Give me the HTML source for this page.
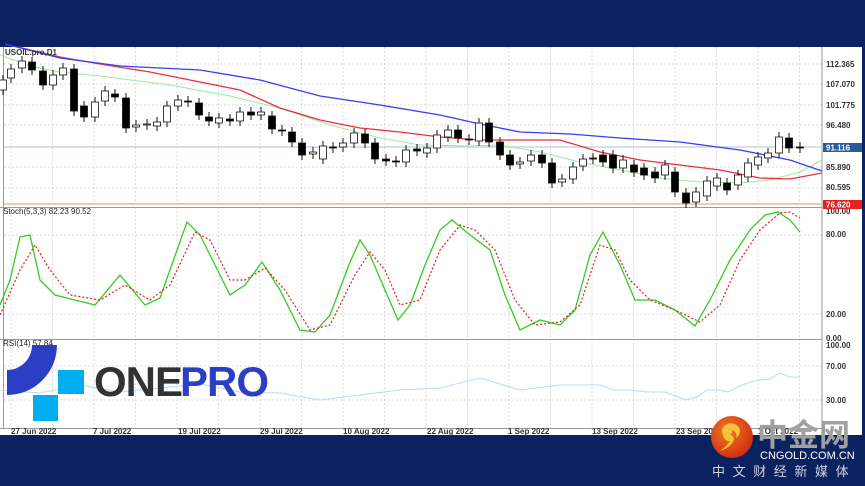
<!DOCTYPE html><html><head><meta charset="utf-8"><style>
body{margin:0;width:865px;height:486px;background:#0b2260;overflow:hidden;font-family:"Liberation Sans",sans-serif}
svg{position:absolute;left:0;top:0}
</style></head><body>
<svg width="865" height="486" viewBox="0 0 865 486" xmlns="http://www.w3.org/2000/svg" font-family="Liberation Sans, sans-serif">
<rect x="0" y="47" width="862" height="388" fill="#fff"/>
<g id="grid" stroke="#ccc" stroke-dasharray="2,2" stroke-width="0.7"></g>
<g stroke="#999" stroke-width="1" fill="none">
<line x1="822" y1="47" x2="822" y2="429"/>
<line x1="0" y1="207.5" x2="822" y2="207.5"/>
<line x1="0" y1="339.5" x2="822" y2="339.5"/>
<line x1="0" y1="428.5" x2="822" y2="428.5"/>
<line x1="3.5" y1="47" x2="3.5" y2="428"/>
</g>
<line x1="4" y1="147" x2="822" y2="147" stroke="#c8d6e4" stroke-width="1.5"/>
<line x1="4" y1="204" x2="822" y2="204" stroke="#f7c4c4" stroke-width="2"/>
<polyline fill="none" stroke="#9ee89e" stroke-width="1" points="0,55 30,66 60,72 100,76 170,85 230,96 280,108 330,125 380,138 420,145 470,146 500,145 540,152 580,162 620,170 660,178 700,182 740,183 770,180 800,172 822,160"/>
<polyline fill="none" stroke="#e8323a" stroke-width="1.3" points="18,47 60,57 100,64 150,72 200,82 240,90 280,108 320,120 360,128 400,132 440,137 480,140 520,140 560,140 600,152 640,160 680,165 720,170 760,178 790,179 822,173"/>
<polyline fill="none" stroke="#3a3ef0" stroke-width="1.3" points="5,44 60,58 120,66 200,70 260,80 320,96 380,105 440,115 480,124 520,132 570,134 620,138 680,142 740,150 790,160 822,171"/>
<g id="candles"></g>
<polyline fill="none" stroke="#33cc22" stroke-width="1.3" points="0,305 10,280 20,237 30,235 40,280 55,295 75,300 95,305 120,275 145,305 160,298 187,222 200,235 215,265 230,295 245,285 262,262 280,290 300,330 315,332 330,315 350,262 360,240 370,255 385,290 398,320 410,305 425,265 440,230 452,220 470,235 490,250 505,295 520,330 540,320 560,325 575,310 590,255 603,232 620,265 635,300 655,300 675,310 695,326 710,300 730,260 750,230 765,215 778,212 790,220 800,232"/>
<polyline fill="none" stroke="#e02020" stroke-width="1.2" stroke-dasharray="2,2" points="0,315 20,270 35,245 50,270 70,295 100,300 125,285 150,300 170,285 195,232 210,240 230,280 245,280 265,268 285,290 310,330 330,325 355,275 370,252 385,270 400,305 420,300 440,250 460,225 475,230 495,250 515,300 535,325 560,322 580,305 600,245 615,250 630,280 650,300 675,310 700,322 720,305 740,260 760,230 780,213 790,212 800,218"/>
<polyline fill="none" stroke="#b8d8f4" stroke-width="1" points="0,390 40,393 80,385 120,392 160,388 200,384 240,392 280,393 320,400 360,395 400,390 440,388 480,378 520,390 560,385 600,385 614,390 630,390 647,392 665,392 678,397 686,400 697,397 707,390 718,390 728,392 740,386 750,382 760,380 770,379 780,373 790,377 800,377"/>
<g font-size="8" fill="#333" font-weight="bold">
<text x="5" y="55">USOIL.pro,D1</text>
<text x="3" y="214" font-weight="normal" fill="#222">Stoch(5,3,3) 82.23 90.52</text>
<text x="3" y="346" font-weight="normal" fill="#222">RSI(14) 57.84</text>
<text x="826" y="67">112.365</text><text x="826" y="87">107.070</text><text x="826" y="108">101.775</text><text x="826" y="128">96.480</text>
<text x="826" y="170">85.890</text><text x="826" y="190">80.595</text>
<text x="826" y="214">100.00</text><text x="826" y="237">80.00</text><text x="826" y="317">20.00</text><text x="826" y="341">0.00</text>
<text x="826" y="348">100.00</text><text x="826" y="369">70.00</text><text x="826" y="403">30.00</text>
<text x="11" y="434">27 Jun 2022</text><text x="93" y="434">7 Jul 2022</text><text x="178" y="434">19 Jul 2022</text><text x="260" y="434">29 Jul 2022</text><text x="343" y="434">10 Aug 2022</text><text x="427" y="434">22 Aug 2022</text><text x="508" y="434">1 Sep 2022</text><text x="592" y="434">13 Sep 2022</text><text x="676" y="434">23 Sep 2022</text><text x="758" y="434">1 Oct 2022</text>
</g>
<rect x="823" y="143" width="39" height="9" fill="#2b5c9a"/><text x="826" y="150.5" font-size="8" fill="#fff" font-weight="bold">91.116</text>
<rect x="823" y="200" width="39" height="9" fill="#e82020"/><text x="826" y="207.5" font-size="8" fill="#fff" font-weight="bold">76.620</text>
<!-- ONEPRO logo -->
<path d="M57,345 A50,50 0 0 1 7,395 L7,370 A25,25 0 0 0 32,345 Z" fill="#2a3fc4"/>
<rect x="58" y="370" width="26" height="24" fill="#00aef0"/>
<rect x="33" y="395" width="25" height="26" fill="#00aef0"/>
<text x="94" y="396" font-size="42" font-weight="bold" fill="#333" letter-spacing="-1">ONE</text>
<text x="180" y="396" font-size="42" font-weight="bold" fill="#2a3fc4" letter-spacing="-1">PRO</text>
<!-- CNGOLD logo -->
<defs><radialGradient id="g" cx="0.4" cy="0.35" r="0.7"><stop offset="0" stop-color="#f07a20"/><stop offset="1" stop-color="#d02a10"/></radialGradient></defs>
<circle cx="732" cy="437" r="21" fill="url(#g)"/>
<path d="M722,432 a9,8 0 1 1 14,6 a6,6 0 0 0 -4,-8 a4,4 0 0 1 -5,5 a5,5 0 0 1 7,4 q-2,8 -14,12 q8,-6 10,-10 q-6,1 -8,-9 z" fill="#f7c13a"/>
<text x="757" y="446" font-size="31" font-weight="bold" fill="#a0a0a0" font-family="Liberation Sans, Noto Sans CJK SC, sans-serif">中金网</text>
<text x="760" y="459" font-size="11" fill="#fff">CNGOLD.COM.CN</text>
<text x="712" y="476" font-size="13" fill="#d0d4de" letter-spacing="7.6" font-family="Liberation Sans, Noto Sans CJK SC, sans-serif">中文财经新媒体</text>
</svg>
<script>
var c=[[3,80,90,0],[11,69,78,0],[22,61,68,0],[32,62,70,1],[43,71,85,1],[53,75,85,0],[63,68,75,0],[74,69,111,1],[84,106,117,1],[95,102,117,0],[105,91,101,0],[115,94,97,1],[126,98,128,1],[136,125,127,0],[147,124,125,0],[157,122,126,0],[167,106,122,0],[178,100,106,0],[188,101,102,1],[199,103,115,1],[209,117,121,1],[219,118,123,0],[230,119,121,1],[240,112,121,0],[251,112,115,1],[261,112,115,0],[272,116,129,1],[282,130,131,1],[292,132,142,1],[302,143,155,1],[313,152,154,0],[323,146,159,0],[333,147,148,1],[343,143,147,0],[354,133,143,0],[365,134,143,1],[375,143,159,1],[386,159,161,1],[396,161,162,1],[406,150,162,0],[417,149,151,1],[427,148,153,0],[437,135,148,0],[448,130,137,0],[458,130,138,1],[469,139,140,1],[479,123,141,0],[489,123,142,1],[500,142,155,1],[510,155,165,1],[520,162,164,0],[531,155,161,0],[542,155,163,1],[552,163,183,1],[562,179,182,0],[573,167,179,0],[583,159,166,0],[593,158,159,1],[603,155,162,1],[613,155,168,1],[623,160,168,0],[634,165,172,1],[644,168,175,1],[655,172,178,1],[665,165,175,0],[675,172,192,1],[686,193,203,1],[696,192,202,0],[707,181,196,0],[717,178,186,0],[727,183,190,1],[738,175,185,0],[748,163,177,0],[758,157,165,0],[768,153,158,0],[779,137,153,0],[789,138,148,1],[800,147,148,1]];
var s='';c.forEach(function(k){var x=k[0],t=k[1],b=k[2];s+='<line x1="'+x+'" y1="'+(t-5)+'" x2="'+x+'" y2="'+(b+5)+'" stroke="#111" stroke-width="1"/>';s+='<rect x="'+(x-3.5)+'" y="'+t+'" width="7" height="'+Math.max(1,b-t)+'" fill="'+(k[3]?'#000':'#fff')+'" stroke="#111" stroke-width="0.8"/>';});
document.getElementById('candles').innerHTML=s;
var g='';for(var x=11;x<822;x+=41.5){g+='<line x1="'+x+'" y1="47" x2="'+x+'" y2="428"/>';}
[64,84,105,125,167,188,235,314,366,400].forEach(function(y){g+='<line x1="4" y1="'+y+'" x2="822" y2="'+y+'"/>';});
document.getElementById('grid').innerHTML=g;
</script>
</body></html>
